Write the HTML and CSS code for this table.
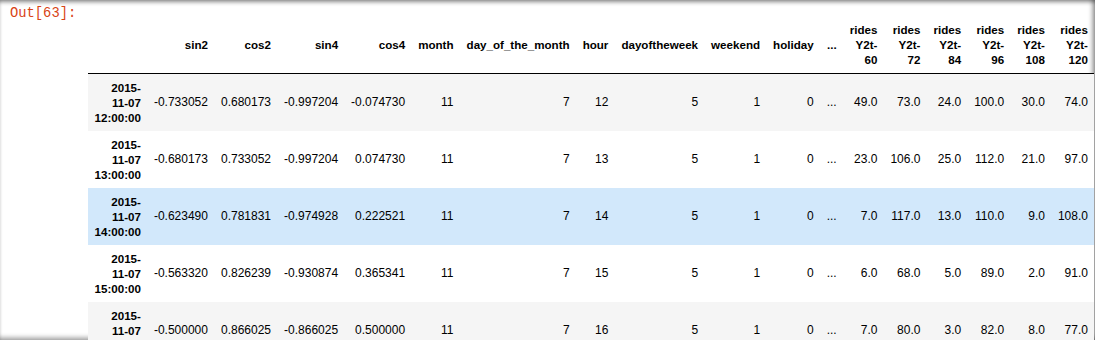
FILE: index.html
```html
<!DOCTYPE html>
<html>
<head>
<meta charset="utf-8">
<link rel="stylesheet" href="styles.css">
</head>
<body>
<div class="cell">
  <div class="prompt">Out[63]:</div>
  <div class="output">
    <table class="df">
      <thead>
        <tr>
          <th></th>
          <th>sin2</th><th>cos2</th><th>sin4</th><th>cos4</th><th>month</th><th>day_of_the_month</th><th>hour</th><th>dayoftheweek</th><th>weekend</th><th>holiday</th><th>...</th>
          <th>rides<br>Y2t-<br>60</th><th>rides<br>Y2t-<br>72</th><th>rides<br>Y2t-<br>84</th><th>rides<br>Y2t-<br>96</th><th>rides<br>Y2t-<br>108</th><th>rides<br>Y2t-<br>120</th>
        </tr>
      </thead>
      <tbody>
        <tr class="odd">
          <th>2015-<br>11-07<br>12:00:00</th>
          <td>-0.733052</td><td>0.680173</td><td>-0.997204</td><td>-0.074730</td><td>11</td><td>7</td><td>12</td><td>5</td><td>1</td><td>0</td><td>...</td>
          <td>49.0</td><td>73.0</td><td>24.0</td><td>100.0</td><td>30.0</td><td>74.0</td>
        </tr>
        <tr>
          <th>2015-<br>11-07<br>13:00:00</th>
          <td>-0.680173</td><td>0.733052</td><td>-0.997204</td><td>0.074730</td><td>11</td><td>7</td><td>13</td><td>5</td><td>1</td><td>0</td><td>...</td>
          <td>23.0</td><td>106.0</td><td>25.0</td><td>112.0</td><td>21.0</td><td>97.0</td>
        </tr>
        <tr class="hover">
          <th>2015-<br>11-07<br>14:00:00</th>
          <td>-0.623490</td><td>0.781831</td><td>-0.974928</td><td>0.222521</td><td>11</td><td>7</td><td>14</td><td>5</td><td>1</td><td>0</td><td>...</td>
          <td>7.0</td><td>117.0</td><td>13.0</td><td>110.0</td><td>9.0</td><td>108.0</td>
        </tr>
        <tr>
          <th>2015-<br>11-07<br>15:00:00</th>
          <td>-0.563320</td><td>0.826239</td><td>-0.930874</td><td>0.365341</td><td>11</td><td>7</td><td>15</td><td>5</td><td>1</td><td>0</td><td>...</td>
          <td>6.0</td><td>68.0</td><td>5.0</td><td>89.0</td><td>2.0</td><td>91.0</td>
        </tr>
        <tr class="odd">
          <th>2015-<br>11-07<br>16:00:00</th>
          <td>-0.500000</td><td>0.866025</td><td>-0.866025</td><td>0.500000</td><td>11</td><td>7</td><td>16</td><td>5</td><td>1</td><td>0</td><td>...</td>
          <td>7.0</td><td>80.0</td><td>3.0</td><td>82.0</td><td>8.0</td><td>77.0</td>
        </tr>
      </tbody>
    </table>
  </div>
</div>
</body>
</html>
```

FILE: styles.css
```css
html, body {
  margin: 0;
  padding: 0;
  background: #fff;
}

.cell {
  width: 1095px;
  height: 340px;
  overflow: hidden;
  display: flex;
  flex-direction: row;
  background: #fff;
  box-shadow: inset 0 4px 4px -2px rgba(0,0,0,0.45),
              inset -5px 0 4px -2px rgba(0,0,0,0.35),
              inset 0 -5px 4px -2px rgba(0,0,0,0.3);
}

.prompt {
  width: 78px;
  flex: none;
  padding: 6px 0 0 10px;
  font-family: "Liberation Mono", monospace;
  font-size: 13.8px;
  line-height: 16px;
  color: #d84315;
}

.output {
  flex: 1;
  padding-top: 16px;
}

.df {
  border-collapse: collapse;
  border: none;
  font-family: "Liberation Sans", Arial, sans-serif;
  font-size: 12px;
  line-height: 15px;
  color: #000;
}

.df th, .df td {
  padding: 6px 6.5px;
  text-align: right;
  vertical-align: middle;
  white-space: nowrap;
}

.df th {
  font-weight: bold;
  font-size: 11.6px;
}

.df thead th {
  border-bottom: 1px solid #000;
}

.df tbody tr {
  background: #fff;
}

.df tbody tr.odd {
  background: #f5f5f5;
}

.df tbody tr.hover {
  background: #d2e8fb;
}
```
